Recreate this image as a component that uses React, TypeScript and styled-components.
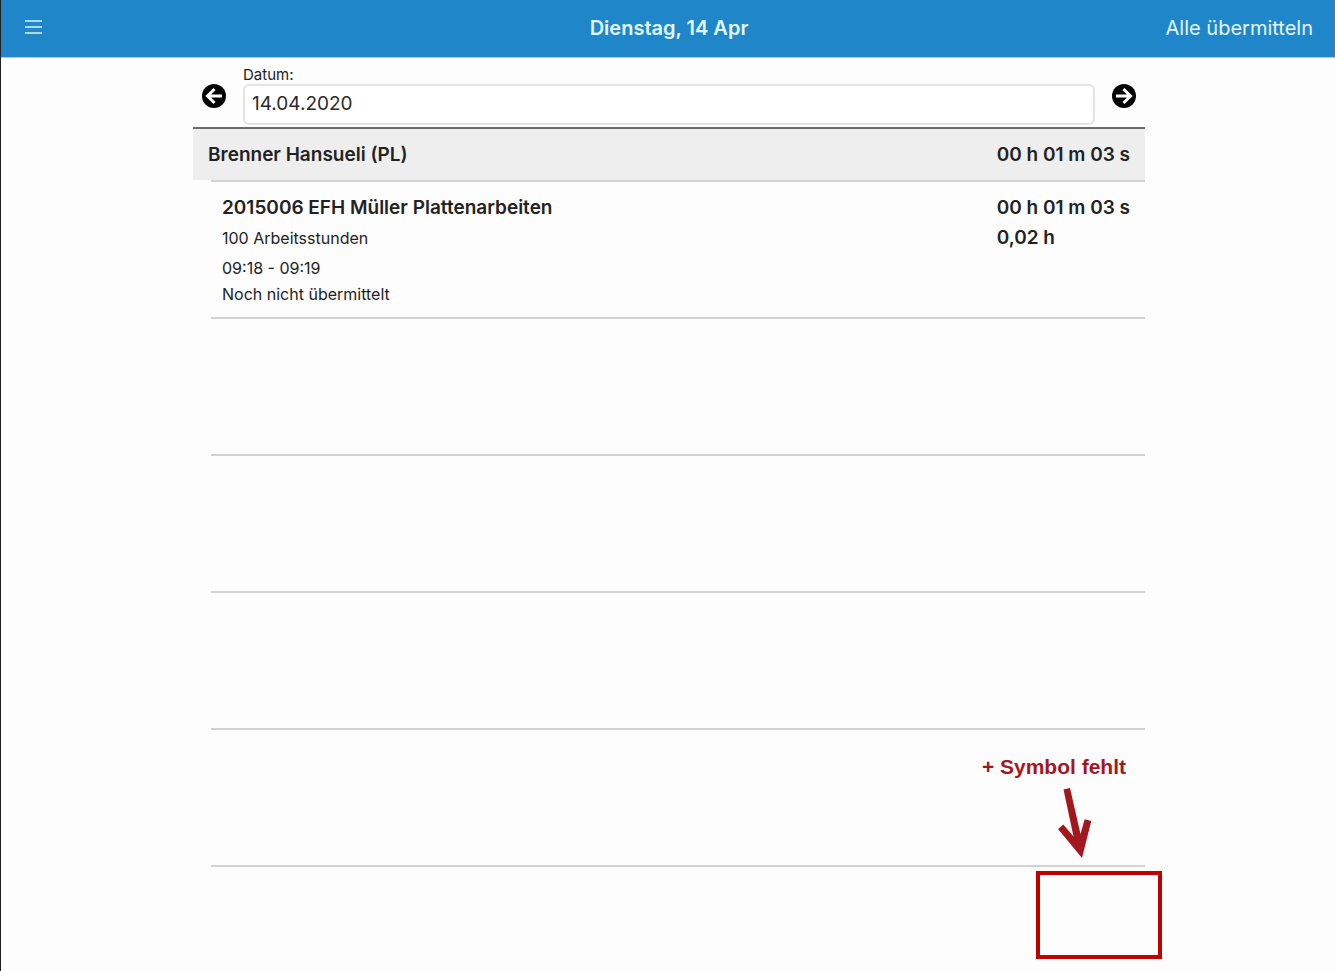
import React from 'react';
import styled, { createGlobalStyle } from 'styled-components';

const GlobalStyle = createGlobalStyle`
  *, *::before, *::after { box-sizing: border-box; }
  body {
    margin: 0;
    background: #fdfdfd;
    color: #222;
    font-family: Inter, Roboto, sans-serif;
  }
`;

const Page = styled.div`
  min-height: 100vh;
  border-left: 1px solid #222;
`;

const TopBar = styled.header`
  display: grid;
  grid-template-columns: 1fr auto 1fr;
  align-items: center;
  height: 58px;
  padding: 0 22px 2px 24px;
  background: #1f87c9;
  border-bottom: 1px solid #a5cce5;
  color: #e4f6fb;
`;

const BarButton = styled.button<{ $end?: boolean }>`
  display: flex;
  justify-self: ${({ $end }) => ($end ? 'end' : 'start')};
  padding: 0;
  border: 0;
  background: none;
  color: inherit;
  font: 400 20px/24px Inter, Roboto, sans-serif;
  cursor: pointer;
`;

const Title = styled.h1`
  margin: 0;
  font-size: 20px;
  line-height: 24px;
  font-weight: 600;
`;

const Content = styled.main`
  width: 100%;
  max-width: 954px;
  margin: 0 auto;
  padding-left: 2px;
`;

const DateBar = styled.form`
  display: flex;
  align-items: flex-start;
  gap: 16px;
  padding: 8px 8px 2px;
`;

const StepButton = styled.button`
  display: flex;
  margin-top: 17px;
  padding: 0;
  border: 0;
  background: none;
  color: #050505;
  cursor: pointer;
`;

const DateField = styled.label`
  display: flex;
  flex: 1;
  flex-direction: column;
  min-width: 0;
  font-size: 15px;
  line-height: 18px;
`;

const DateInput = styled.input`
  width: 100%;
  height: 41px;
  padding: 0 7px 2px;
  border: 2px solid #e4e4e4;
  border-radius: 6px;
  background: #fff;
  color: #2a2a2a;
  font: 400 19px/24px Inter, Roboto, sans-serif;
`;

const GroupHeader = styled.div`
  display: flex;
  justify-content: space-between;
  padding: 14px 15px 13px;
  border-top: 2px solid #6c6c6c;
  background: #eee;
`;

const Strong = styled.strong`
  font-size: 19px;
  line-height: 24px;
  font-weight: 600;
`;

const Entries = styled.ul`
  margin: 0 0 0 18px;
  padding: 0;
  list-style: none;
  border-top: 2px solid #d3d3d3;
`;

const Entry = styled.li`
  position: relative;
  display: flex;
  justify-content: space-between;
  min-height: 137px;
  padding: 14px 15px 9px 11px;
  border-bottom: 2px solid #d3d3d3;
`;

const Stack = styled.div<{ $gap: number }>`
  display: flex;
  flex-direction: column;
  gap: ${({ $gap }) => $gap}px;
`;

const Line = styled.span`
  font-size: 16px;
  line-height: 24px;
`;

const Callout = styled.aside`
  position: absolute;
  top: 25px;
  right: -17px;
  display: flex;
  flex-direction: column;
  align-items: flex-end;
  color: #a3181f;
`;

const CalloutText = styled.p`
  margin: 0 36px 9px 0;
  font: 700 21px/24px "Liberation Sans", Arial, sans-serif;
`;

const CalloutArrow = styled.svg`
  display: block;
  margin: 0 68px 13px 0;
`;

const Highlight = styled.div`
  width: 126px;
  height: 88px;
  border: 4px solid #c00000;
`;

const MenuIcon = () => (
  <svg width="18" height="18" viewBox="0 0 18 18" aria-hidden="true">
    <path d="M0 2h17M0 8h17M0 14h17" stroke="#a5dbe3" strokeWidth="2" />
  </svg>
);

const StepIcon = ({ forward }: { forward?: boolean }) => (
  <svg width="26" height="26" viewBox="0 0 26 26" aria-hidden="true">
    <circle cx="13" cy="13" r="12" fill="currentColor" />
    <path
      d={forward ? 'M5 13h13.500M12.500 6l7 7-7 7' : 'M21 13h-13.500M13.500 6l-7 7 7 7'}
      fill="none"
      stroke="#fff"
      strokeWidth="3"
    />
  </svg>
);

export default function App() {
  return (
    <>
      <GlobalStyle />
      <Page>
        <TopBar>
          <BarButton type="button" aria-label="Menü">
            <MenuIcon />
          </BarButton>
          <Title>Dienstag, 14 Apr</Title>
          <BarButton type="button" $end>
            Alle übermitteln
          </BarButton>
        </TopBar>
        <Content>
          <DateBar>
            <StepButton type="button" aria-label="Vorheriger Tag">
              <StepIcon />
            </StepButton>
            <DateField htmlFor="datum">
              Datum:
              <DateInput id="datum" type="text" defaultValue="14.04.2020" />
            </DateField>
            <StepButton type="button" aria-label="Nächster Tag">
              <StepIcon forward />
            </StepButton>
          </DateBar>
          <GroupHeader>
            <Strong>Brenner Hansueli (PL)</Strong>
            <Strong>00 h 01 m 03 s</Strong>
          </GroupHeader>
          <Entries>
            <Entry>
              <Stack $gap={6}>
                <Strong>2015006 EFH Müller Plattenarbeiten</Strong>
                <Line>100 Arbeitsstunden</Line>
                <Stack $gap={2}>
                  <Line>09:18 - 09:19</Line>
                  <Line>Noch nicht übermittelt</Line>
                </Stack>
              </Stack>
              <Stack $gap={6}>
                <Strong>00 h 01 m 03 s</Strong>
                <Strong>0,02 h</Strong>
              </Stack>
            </Entry>
            <Entry />
            <Entry />
            <Entry />
            <Entry>
              <Callout>
                <CalloutText>+ Symbol fehlt</CalloutText>
                <CalloutArrow width="36" height="70" viewBox="0 0 36 70" aria-hidden="true">
                  <path
                    d="M5.500 1.500L12 0L22.500 46L26.700 31.300L33.300 33L24 70L0 41L5.300 36.500L15.500 48.500Z"
                    fill="currentColor"
                  />
                </CalloutArrow>
                <Highlight />
              </Callout>
            </Entry>
          </Entries>
        </Content>
      </Page>
    </>
  );
}
